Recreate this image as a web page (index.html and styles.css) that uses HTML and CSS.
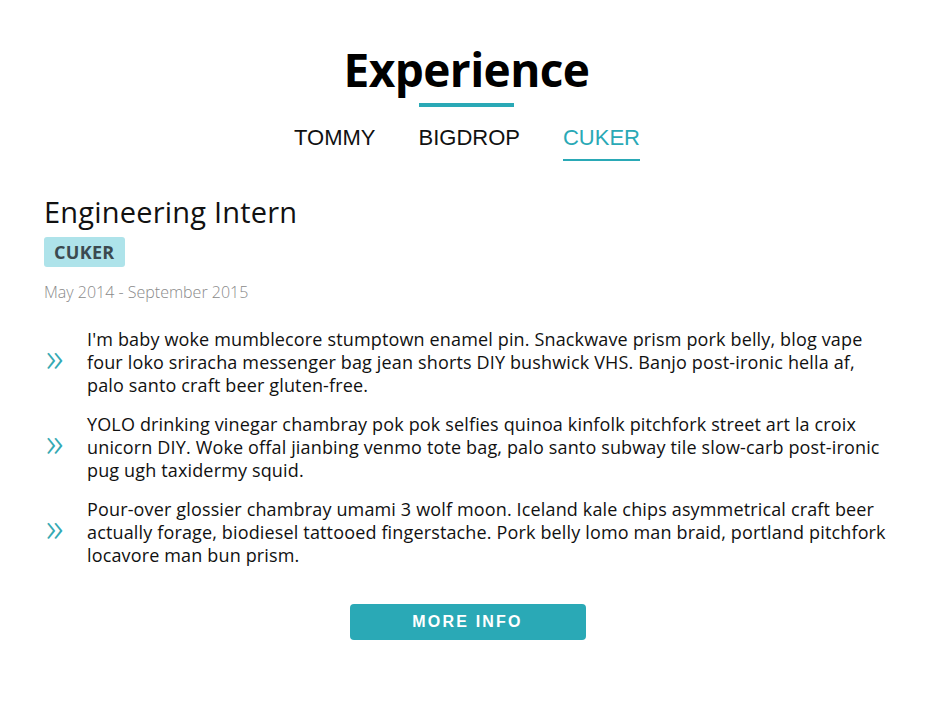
FILE: index.html
```html
<!DOCTYPE html>
<html lang="en">
<head>
<meta charset="utf-8">
<title>Experience</title>
<link rel="stylesheet" href="styles.css">
</head>
<body>
<section class="experience">
  <h1 class="title">Experience</h1>
  <div class="title-bar"></div>
  <nav class="tabs">
    <a class="tab">TOMMY</a>
    <a class="tab">BIGDROP</a>
    <a class="tab active">CUKER</a>
  </nav>
  <div class="job">
    <h2 class="job-title">Engineering Intern</h2>
    <span class="badge">CUKER</span>
    <p class="dates">May 2014 - September 2015</p>
    <ul class="duties">
      <li class="duty"><span class="arrow">»</span><p class="duty-text">I'm baby woke mumblecore stumptown enamel pin. Snackwave prism pork belly, blog vape four loko sriracha messenger bag jean shorts DIY bushwick VHS. Banjo post-ironic hella af, palo santo craft beer gluten-free.</p></li>
      <li class="duty"><span class="arrow">»</span><p class="duty-text">YOLO drinking vinegar chambray pok pok selfies quinoa kinfolk pitchfork street art la croix unicorn DIY. Woke offal jianbing venmo tote bag, palo santo subway tile slow-carb post-ironic pug ugh taxidermy squid.</p></li>
      <li class="duty"><span class="arrow">»</span><p class="duty-text">Pour-over glossier chambray umami 3 wolf moon. Iceland kale chips asymmetrical craft beer actually forage, biodiesel tattooed fingerstache. Pork belly lomo man braid, portland pitchfork locavore man bun prism.</p></li>
    </ul>
  </div>
  <div class="actions">
    <button class="more-btn">MORE INFO</button>
  </div>
</section>
</body>
</html>
```

FILE: styles.css
```css
* { box-sizing: border-box; }
html, body { margin: 0; padding: 0; background: #fff; }
body { font-family: "Open Sans", "Noto Sans", sans-serif; color: #111; }

.experience {
  width: 845px;
  margin: 0 auto;
  padding-top: 37px;
}

.title {
  margin: 0;
  text-align: center;
  font-size: 46px;
  font-weight: 700;
  line-height: 64px;
  letter-spacing: -0.6px;
  color: #000;
}

.title-bar {
  width: 95px;
  height: 4px;
  background: #2aa9b6;
  margin: 2px auto 0;
}

.tabs {
  display: flex;
  justify-content: center;
  gap: 43px;
  margin-top: 17px;
  padding-left: 1px;
}

.tab {
  font-family: "Liberation Sans", Arial, sans-serif;
  font-size: 22px;
  line-height: 28px;
  color: #111;
  padding-bottom: 7px;
  border-bottom: 2px solid transparent;
}

.tab.active {
  color: #2aa9b6;
  border-bottom-color: #2aa9b6;
}

.job { margin-top: 32px; }

.job-title {
  margin: 0;
  font-size: 29px;
  font-weight: 400;
  line-height: 38px;
  letter-spacing: 0.2px;
  color: #111;
}

.badge {
  display: inline-block;
  margin-top: 6px;
  padding: 0 10px;
  height: 30px;
  line-height: 31px;
  background: #aee3ea;
  color: #3b4a50;
  font-weight: 700;
  font-size: 18px;
  letter-spacing: 0.3px;
  border-radius: 3px;
}

.dates {
  margin: 13px 0 0;
  font-size: 16px;
  font-weight: 300;
  line-height: 24px;
  color: #8a8a8a;
}

.duties {
  list-style: none;
  margin: 24px 0 0;
  padding: 0;
  display: flex;
  flex-direction: column;
  gap: 16px;
}

.duty {
  display: flex;
  align-items: center;
}

.arrow {
  width: 43px;
  flex: none;
  padding-left: 2px;
  padding-bottom: 12px;
  color: #35a9b3;
  font-size: 40px;
  font-weight: 300;
  line-height: 23px;
}

.duty-text {
  margin: 0;
  font-size: 18px;
  line-height: 23px;
  letter-spacing: 0.15px;
  color: #111;
}

.actions {
  display: flex;
  justify-content: center;
  margin-top: 37px;
  padding-left: 2px;
}

.more-btn {
  width: 236px;
  height: 36px;
  border: none;
  border-radius: 4px;
  background: #2aa9b6;
  color: #fff;
  font-family: "Liberation Sans", Arial, sans-serif;
  font-weight: 700;
  font-size: 16px;
  letter-spacing: 2.2px;
}
```
